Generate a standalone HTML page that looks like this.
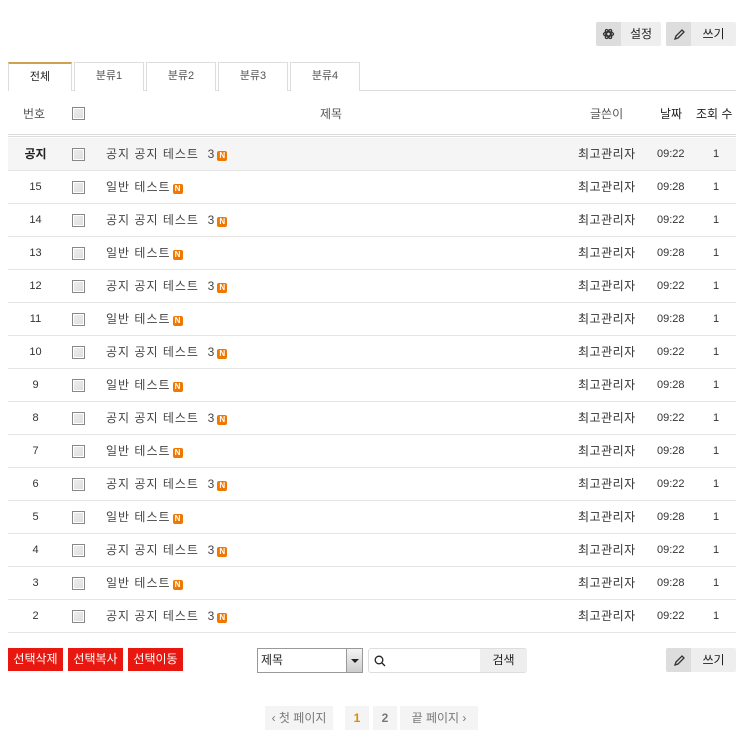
<!DOCTYPE html>
<html><head><meta charset="utf-8"><style>
*{box-sizing:border-box;margin:0;padding:0}
body{width:744px;height:739px;background:#fff;font-family:"Liberation Sans","Noto Sans CJK KR",sans-serif;font-size:12px;color:#333;position:relative;overflow:hidden}
.a{position:absolute}
.btn{position:absolute;height:24px;background:#eee;border-radius:2px;overflow:hidden;font-size:12px;color:#222}
.btn .ic{position:absolute;left:0;top:0;width:25px;height:24px;background:#ddd}
.btn .t{position:absolute;left:25px;right:0;top:0;line-height:24px;text-align:center}
.tab{position:absolute;top:62px;height:29px;border:1px solid #ddd;border-bottom:none;background:#fff;text-align:center;line-height:27px;color:#555;font-size:11px}
.cb{position:absolute;width:13px;height:13px;border:1px solid #888;background:linear-gradient(135deg,#eee,#ddd);box-shadow:inset 0 0 0 1px #fff}
.row{position:absolute;left:8px;width:728px;height:33px;border-bottom:1px solid #e5e5e5;line-height:32px;font-size:11px}
.row span{position:absolute;top:0}
.tt{font-size:12px;letter-spacing:1px;color:#444}
.n{display:inline-block;width:10px;height:10px;background:#f07800;color:#fff;font-size:8px;line-height:10px;text-align:center;border-radius:2px;vertical-align:0;font-weight:bold;margin-left:2px;font-style:normal;letter-spacing:0}
.red{position:absolute;top:648px;height:23px;width:55px;background:#e8170f;color:#fff;text-align:center;line-height:23px;font-size:12px}
.pg{position:absolute;top:706px;height:24px;background:#f4f4f4;line-height:24px;text-align:center;color:#777}
</style></head><body>
<div class="btn" style="left:596px;top:22px;width:65px"><div class="ic"><svg width="25" height="24"><g transform="translate(12.5 12)" fill="none" stroke="#333" stroke-width="1.3"><circle r="2"/><ellipse rx="5" ry="2.2"/><ellipse rx="5" ry="2.2" transform="rotate(60)"/><ellipse rx="5" ry="2.2" transform="rotate(120)"/></g></svg></div><div class="t">설정</div></div>
<div class="btn" style="left:666px;top:22px;width:70px"><div class="ic"><svg width="25" height="24"><path d="M9 17l1-3 6-6 2 2-6 6z" fill="none" stroke="#333" stroke-width="1.3"/></svg></div><div class="t">쓰기</div></div>

<div class="a" style="left:8px;top:90px;width:728px;height:1px;background:#ddd"></div>
<div class="tab" style="left:8px;width:64px;border-top:2px solid #d0a050;color:#222">전체</div>
<div class="tab" style="left:74px;width:70px">분류1</div>
<div class="tab" style="left:146px;width:70px">분류2</div>
<div class="tab" style="left:218px;width:70px">분류3</div>
<div class="tab" style="left:290px;width:70px">분류4</div>

<div class="a" style="left:8px;top:104px;width:728px;height:20px;line-height:20px;color:#555">
<span class="a" style="left:15px">번호</span>
<span class="a" style="left:312px">제목</span>
<span class="a" style="left:582px">글쓴이</span>
<span class="a" style="left:652px;color:#222">날짜</span>
<span class="a" style="left:688px;color:#222;white-space:nowrap">조회 수</span>
</div>
<div class="cb" style="left:72px;top:107px"></div>
<div class="a" style="left:8px;top:134px;width:728px;height:3px;border-top:1px solid #ddd;border-bottom:1px solid #ddd"></div>

<div id="rows"></div>
<script>
var h='';
var nums=['공지',15,14,13,12,11,10,9,8,7,6,5,4,3,2];
for(var i=0;i<nums.length;i++){
 var y=138+i*33, even=(i%2==0);
 var title=even?'공지 공지 테스트 &nbsp;3':'일반 테스트';
 var bg=i==0?'background:#f5f5f5;':'';
 h+='<div class="row" style="top:'+y+'px;'+bg+'"><span style="left:0;width:55px;text-align:center;'+(i==0?'font-weight:bold;color:#222;font-size:12px':'')+'">'+nums[i]+'</span><span class="tt" style="left:98px">'+title+'<i class="n">N</i></span><span style="left:570px;font-size:12px;letter-spacing:.5px">최고관리자</span><span style="left:649px">'+(even?'09:22':'09:28')+'</span><span style="left:705px">1</span></div>';
 h+='<div class="cb" style="left:72px;top:'+(y+10)+'px"></div>';
}
document.getElementById('rows').innerHTML=h;
</script>

<div class="red" style="left:8px">선택삭제</div>
<div class="red" style="left:68px">선택복사</div>
<div class="red" style="left:128px">선택이동</div>
<div class="a" style="left:257px;top:648px;width:106px;height:25px;border:1px solid #999;background:#fff;line-height:23px;padding-left:3px;color:#222">제목
<div class="a" style="right:0;top:0;width:16px;height:23px;background:linear-gradient(#f4f4f4,#ccc);border-left:1px solid #999"><div class="a" style="left:4px;top:10px;border:4px solid transparent;border-top:4px solid #222;border-bottom:none"></div></div></div>
<div class="a" style="left:368px;top:648px;width:159px;height:25px;border:1px solid #ddd;border-radius:3px;background:#fff"><svg class="a" style="left:5px;top:6px" width="12" height="12"><circle cx="5" cy="5" r="3.8" fill="none" stroke="#222" stroke-width="1.3"/><path d="M8 8l3 3" stroke="#222" stroke-width="1.3"/></svg>
<div class="a" style="left:111px;top:0;width:47px;height:23px;background:#eee;line-height:23px;text-align:center;color:#222">검색</div></div>
<div class="btn" style="left:666px;top:648px;width:70px"><div class="ic"><svg width="25" height="24"><path d="M9 17l1-3 6-6 2 2-6 6z" fill="none" stroke="#333" stroke-width="1.3"/></svg></div><div class="t">쓰기</div></div>

<div class="pg" style="left:265px;width:68px">&lsaquo; 첫 페이지</div>
<div class="pg" style="left:345px;width:24px;color:#e08a00;font-weight:bold">1</div>
<div class="pg" style="left:373px;width:24px;font-weight:bold">2</div>
<div class="pg" style="left:400px;width:78px">끝 페이지 &rsaquo;</div>
</body></html>
